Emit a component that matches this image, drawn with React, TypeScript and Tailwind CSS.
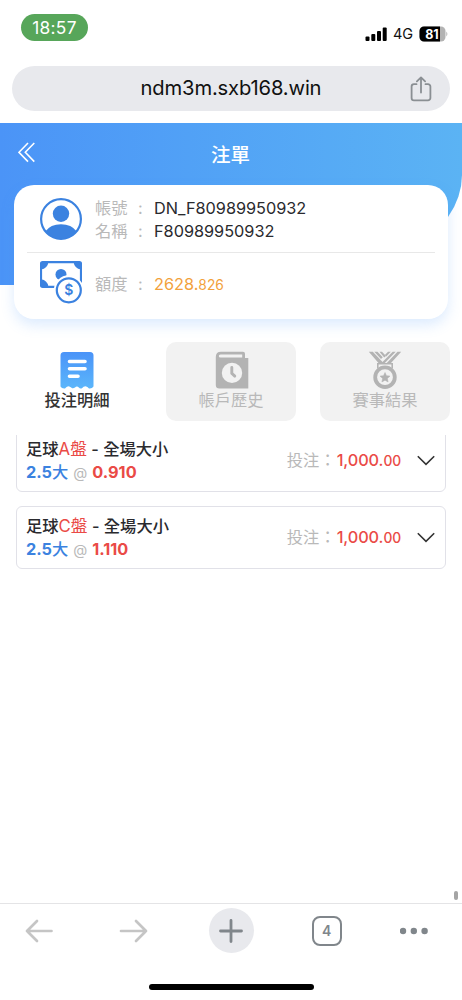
import { ReactNode } from "react";

type Bet = {
    market: string;
    odds: string;
};

const bets: Bet[] = [
    { market: "A盤", odds: "0.910" },
    { market: "C盤", odds: "1.110" },
];

function StatusBar() {
    return (
        <div className="flex h-[66px] items-start justify-between pl-[21px] pr-[14px]">
            <div className="mt-[14px] flex h-[27px] w-[67px] items-center justify-center rounded-full bg-[#57a65a] text-[17.3px] text-white">
                <span className="tracking-[0.3px]">18:57</span>
            </div>
            <div className="mt-[26px] flex h-[15px] items-center">
                <svg width="22" height="14" viewBox="0 0 22 14">
                    <rect x="0.5" y="9.5" width="4" height="4.5" rx="1" />
                    <rect x="6.3" y="7" width="4" height="7" rx="1" />
                    <rect x="12" y="4" width="4" height="10" rx="1" />
                    <rect x="17.7" y="0.5" width="4" height="13.5" rx="1" />
                </svg>
                <span className="ml-[6px] w-[21px] text-[14.5px] tracking-[-0.2px] text-[#111]">4G</span>
                <svg className="ml-[5px]" width="29" height="16" viewBox="0 0 29 16">
                    <rect x="0.5" y="0.5" width="26" height="15" rx="4.5" fill="#b3b3b3" />
                    <path d="M5 .5H21V15.5H5A4.5 4.5 0 0 1 .5 11V5A4.5 4.5 0 0 1 5 .5Z" fill="#000" />
                    <path d="M27.3 5.5Q29.5 8 27.3 10.5Z" fill="#b3b3b3" />
                    <text x="13" y="12.5" textAnchor="middle" className="fill-white text-[12.5px] font-bold">
                        81
                    </text>
                </svg>
            </div>
        </div>
    );
}

function AddressBar() {
    return (
        <div className="mx-[12px] mb-[12px] flex h-[45px] items-center rounded-full bg-[#e8e9ed]">
            <p className="ml-[24px] flex-1 pl-[30px] text-center text-[20.2px] tracking-[-0.15px] text-[#111]">
                ndm3m.sxb168.win
            </p>
            <svg
                className="mr-[18px] ml-[14px]"
                width="22"
                height="26"
                viewBox="0 0 22 26"
                fill="none"
                stroke="#8a8f93"
                strokeWidth="1.8"
                strokeLinecap="round"
                strokeLinejoin="round"
            >
                <path d="M6.5 8.2H4A2.4 2.4 0 0 0 1.6 10.6V22A2.4 2.4 0 0 0 4 24.4H18A2.4 2.4 0 0 0 20.4 22V10.6A2.4 2.4 0 0 0 18 8.2H15.5" />
                <path d="M11 16.5V1.5M6.9 5.3L11 1.4L15.1 5.3" />
            </svg>
        </div>
    );
}

function UserIcon() {
    return (
        <svg width="42" height="42" viewBox="0 0 42 42">
            <circle cx="21" cy="21" r="19.9" fill="#fff" stroke="#3b82e0" strokeWidth="2.2" />
            <circle cx="21" cy="15.8" r="8.2" fill="#3b82e0" />
            <path d="M5.2 33.5Q10.5 26.2 21 26.2Q31.5 26.2 36.8 33.5Q31 41 21 41Q11 41 5.2 33.5Z" fill="#3b82e0" />
        </svg>
    );
}

function MoneyIcon() {
    return (
        <svg width="42" height="43" viewBox="0 0 42 43">
            <rect x="1" y="1.2" width="40" height="24.6" rx="1.5" fill="#fff" stroke="#3b82e0" strokeWidth="2.2" />
            <path
                d="M1 1H8.5Q7.5 7.5 1 8.5ZM41 1H33.5Q34.5 7.5 41 8.5ZM1 25.8H8.5Q7.5 19.3 1 18.3Z"
                fill="#3b82e0"
            />
            <circle cx="21" cy="13.5" r="5.5" fill="#3b82e0" />
            <circle cx="28.8" cy="29.3" r="15" fill="#fff" />
            <circle cx="28.8" cy="29.3" r="12" fill="#fff" stroke="#3b82e0" strokeWidth="2.2" />
            <text x="28.8" y="34.3" textAnchor="middle" className="fill-[#3b82e0] text-[14px] font-semibold">
                $
            </text>
        </svg>
    );
}

function AccountCard() {
    return (
        <section className="relative -mt-[100px] mx-[14px] h-[134px] rounded-[20px] bg-white px-[13px] text-[16.3px] leading-[23px] shadow-[0_6px_14px_rgba(79,155,248,0.2)]">
            <div className="flex h-[68px] items-center border-b-[1.5px] border-[#e8e8e8] pl-[13px]">
                <UserIcon />
                <div className="ml-[13px] mt-[3px]">
                    {[
                        ["帳號", "DN_F80989950932"],
                        ["名稱", "F80989950932"],
                    ].map(([label, value]) => (
                        <p key={label} className="flex text-[#2a2a2e]">
                            <span className="w-[43px] text-[#b9b9b9]">{label}</span>
                            <span className="w-[16px] text-[#b9b9b9]">:</span>
                            <span className="tracking-[-0.02px]">{value}</span>
                        </p>
                    ))}
                </div>
            </div>
            <div className="flex h-[59px] items-center pl-[13px]">
                <MoneyIcon />
                <p className="ml-[13px] mt-[4px] flex text-[#f2a13c]">
                    <span className="w-[43px] text-[#b9b9b9]">額度</span>
                    <span className="w-[16px] text-[#b9b9b9]">:</span>
                    <span>
                        2628.<span className="text-[13.8px]">826</span>
                    </span>
                </p>
            </div>
        </section>
    );
}

function Tab({ label, active, children }: { label: string; active?: boolean; children: ReactNode }) {
    return (
        <button
            className={`flex h-[79px] w-[130px] flex-col items-center rounded-[10px] pt-[9px] text-[16.3px] leading-[22px] ${
                active ? "font-medium text-[#333]" : "bg-[#f2f2f2] text-[#b9b9b9]"
            }`}
        >
            {children}
            <span>{label}</span>
        </button>
    );
}

function Tabs() {
    return (
        <nav className="mt-[23px] ml-[12px] mr-[12px] flex justify-between">
            <Tab label="投注明細" active>
                <svg width="34" height="38" viewBox="0 0 34 38">
                    <defs>
                        <linearGradient id="receipt" x1="0" y1="0" x2="0" y2="1">
                            <stop offset="0" stopColor="#4a93f8" />
                            <stop offset="1" stopColor="#5bb6fb" />
                        </linearGradient>
                    </defs>
                    <path
                        d="M4 1H30Q33.5 1 33.5 4.5V35.5Q32 38 29 37.5Q27.5 35.5 25.5 35.3Q23.5 35.5 22 37.2Q20 38 18.8 36.5Q17 34.5 15 36.5Q13 38 11.5 36.8Q10 35.3 8.3 35.3Q6.5 35.5 5 37.5Q2 38 .5 35.5V4.5Q.5 1 4 1Z"
                        fill="url(#receipt)"
                    />
                    <path d="M9.5 10.5H25M9.5 17.8H25M9.5 25.2H18" stroke="#fff" strokeWidth="3.6" strokeLinecap="round" />
                </svg>
            </Tab>
            <Tab label="帳戶歷史">
                <svg className="ml-[2px]" width="34" height="38" viewBox="0 0 34 38">
                    <path
                        d="M6 .8H28Q30 .8 30 2.8V7H33.3V37.5H4.5Q.8 37.5 .8 34V6Q.8 .8 6 .8ZM5.5 3.4Q3.8 3.4 3.8 5Q3.8 6.6 5.5 6.6H27.2V3.4Z"
                        fill="#b3b3b3"
                        fillRule="evenodd"
                    />
                    <circle cx="17" cy="21.9" r="10.2" fill="#f2f2f2" />
                    <path d="M16.8 16.5V22.3L19.8 25.1" fill="none" stroke="#b3b3b3" strokeWidth="2.9" strokeLinecap="round" />
                </svg>
            </Tab>
            <Tab label="賽事結果">
                <svg width="34" height="38" viewBox="0 0 34 38" fill="none" stroke="#b3b3b3">
                    <path d="M.8 .8H4.8L15.5 12H10.5ZM6.3 .8H9.5L14.8 6.3L13 8ZM11.5 .8H14L18 5L16.2 6.5Z" fill="#b3b3b3" stroke="none" />
                    <path d="M33.2 .8H29.5L18.8 12H23ZM27.7 .8H24.7L13.5 12H16.8ZM22.8 .8H20L16.9 4L18.2 5.5Z" fill="#b3b3b3" stroke="none" />
                    <path d="M9.8 17.5V12.8H24.2V17.5" strokeWidth="1.6" />
                    <circle cx="17" cy="26.2" r="9.8" strokeWidth="3.8" />
                    <path
                        d="M17 21.5L18.5 24.7L22 25.1L19.4 27.5L20.1 31L17 29.2L13.9 31L14.6 27.5L12 25.1L15.5 24.7Z"
                        fill="#b3b3b3"
                        strokeWidth="0.5"
                    />
                </svg>
            </Tab>
        </nav>
    );
}

function BetRow({ market, odds }: Bet) {
    return (
        <li className="flex h-[63px] items-center justify-between rounded-[6px] border-[1.5px] border-[#e1e1e8] pl-[9px] pr-[10px]">
            <div className="text-[16.3px] leading-[23px] text-[#2a2a2e]">
                <p className="font-medium">
                    足球<span className="text-[16.8px] font-normal text-[#ea4a46]">{market}</span> - 全場大小
                </p>
                <p className="font-bold text-[#3b82e0]">
                    2.5<span className="font-medium">大</span>
                    <span className="mx-[5px] text-[14.5px] font-normal text-[#b9b9b9]">@</span>
                    <span className="text-[#ea4a46]">{odds}</span>
                </p>
            </div>
            <div className="flex items-center text-[16.3px] text-[#b9b9b9]">
                <span>投注：</span>
                <span className="ml-px font-medium tracking-[-0.1px] text-[#ea4a46]">
                    1,000.<span className="text-[13.8px]">00</span>
                </span>
                <svg className="ml-[16px]" width="18" height="11" viewBox="0 0 18 11" fill="none" stroke="#333" strokeWidth="1.6">
                    <path d="M.8 1.2L9 9.3L17.2 1.2" />
                </svg>
            </div>
        </li>
    );
}

function BottomBar() {
    return (
        <footer className="flex h-[97px] flex-col items-center justify-between border-t border-[#e4e4e6] pb-[10px] pt-[4px]">
            <div className="flex h-[45px] w-full items-center justify-between pl-[25px] pr-[33px]">
                <svg width="29" height="24" viewBox="0 0 29 24" fill="none" stroke="#c5c5c5" strokeWidth="2.7" strokeLinecap="round" strokeLinejoin="round">
                    <path d="M26.5 12H2M12 2L2 12L12 22" />
                </svg>
                <svg className="ml-[7px]" width="29" height="24" viewBox="0 0 29 24" fill="none" stroke="#c5c5c5" strokeWidth="2.7" strokeLinecap="round" strokeLinejoin="round">
                    <path d="M2 12H27M17 2L27 12L17 22" />
                </svg>
                <div className="ml-[2px] flex size-[45px] items-center justify-center rounded-full bg-[#e8e9ed]">
                    <svg width="24" height="24" viewBox="0 0 24 24" stroke="#80868b" strokeWidth="2.8" strokeLinecap="round">
                        <path d="M12 1.5V22.5M1.5 12H22.5" />
                    </svg>
                </div>
                <div className="flex size-[30px] items-center justify-center rounded-[8px] border-[2.5px] border-[#80868b] text-[14px] font-semibold text-[#80868b]">
                    4
                </div>
                <svg width="29" height="8" viewBox="0 0 29 8" fill="#80868b">
                    <circle cx="3" cy="4" r="3.2" />
                    <circle cx="13.8" cy="4" r="3.2" />
                    <circle cx="24.6" cy="4" r="3.2" />
                </svg>
            </div>
            <div className="h-[6px] w-[165px] rounded-full bg-black" />
        </footer>
    );
}

export default function App() {
    return (
        <div className="flex h-[1000px] w-[462px] flex-col overflow-hidden bg-white font-['Inter','Noto_Sans_CJK_TC',sans-serif]">
            <StatusBar />
            <AddressBar />
            <header className="flex h-[162px] items-start rounded-br-[184px_110px] bg-linear-to-r from-[#4b94f7] to-[#5bb3f4] pt-[15px]">
                <svg className="ml-[18px] mt-[4px]" width="18" height="21" viewBox="0 0 18 21" fill="none" stroke="#fff" strokeWidth="1.6">
                    <path d="M10 1L1 10.3L10 19.6M16.3 1L7.3 10.3L16.3 19.6" />
                </svg>
                <h1 className="flex-1 pr-[37px] text-center text-[19.5px] font-medium leading-[34px] text-white">注單</h1>
            </header>
            <AccountCard />
            <Tabs />
            <main className="mt-[14px] flex-1 overflow-hidden px-[16px]">
                <ul className="-mt-[6px] flex flex-col gap-[14px]">
                    {bets.map((bet) => (
                        <BetRow key={bet.market} {...bet} />
                    ))}
                </ul>
            </main>
            <div className="mb-[3px] mr-[4px] h-[9px] w-[4px] self-end rounded-full bg-[#a5a5a5]" />
            <BottomBar />
        </div>
    );
}
